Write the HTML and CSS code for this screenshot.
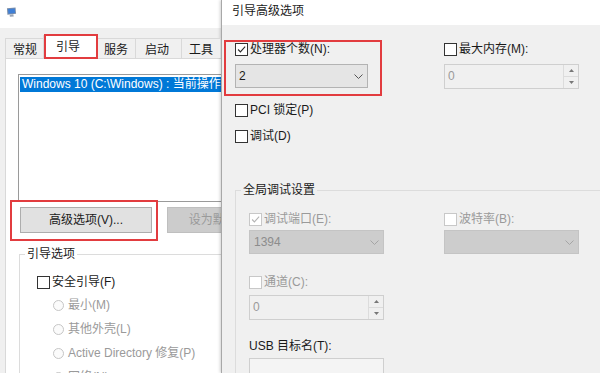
FILE: index.html
```html
<!DOCTYPE html>
<html lang="zh-CN">
<head>
	<meta charset="utf-8">
	<title>引导高级选项</title>
	<link rel="stylesheet" href="styles.css">
</head>
<body>
<div class="screen">
	<div class="dlg main-dlg">
		<div class="titlebar">
			<svg class="app-icon" viewBox="0 0 12 11">
				<path d="M1 1.5 L10.5 0.5 L11 7.5 L1.5 8.5 Z" fill="#7d8fa8"/>
				<path d="M2.2 2.3 L9.6 1.6 L9.9 6.7 L2.6 7.4 Z" fill="#3f7fd6"/>
				<path d="M4 8.5 L8 8.1 L8.5 10.5 L4.2 10.8 Z" fill="#9aa5b5"/>
			</svg>
		</div>
		<div class="main-body">
			<div class="tabs">
				<span class="tab">常规</span>
				<span class="tab on">引导</span>
				<span class="tab">服务</span>
				<span class="tab wide">启动</span>
				<span class="tab">工具</span>
			</div>
			<div class="tab-panel">
				<div class="listbox">
					<div class="list-item sel">Windows 10 (C:\Windows) : 当前操作系统; 默认 OS</div>
				</div>
				<div class="btn-row">
					<button class="btn">高级选项(V)...</button>
					<button class="btn btn-default" disabled>设为默认值(D)</button>
				</div>
				<fieldset class="group boot-opts">
					<legend>引导选项</legend>
					<label class="check"><span class="box"></span>安全引导(F)</label>
					<div class="radios">
						<label class="radio"><span class="dot"></span>最小(M)</label>
						<label class="radio"><span class="dot"></span>其他外壳(L)</label>
						<label class="radio"><span class="dot"></span>Active Directory 修复(P)</label>
						<label class="radio"><span class="dot"></span>网络(N)</label>
					</div>
				</fieldset>
			</div>
		</div>
	</div>

	<div class="dlg adv-dlg">
		<div class="titlebar">引导高级选项</div>
		<div class="adv-body">
			<div class="pair">
				<div class="field">
					<label class="check"><span class="box"><svg viewBox="0 0 13 13"><path d="M2.5 6.5 L5.2 9.3 L10.8 3.2" fill="none" stroke="#2b2b2b" stroke-width="1.3"/></svg></span>处理器个数(N):</label>
					<div class="combo">2<svg class="chev" viewBox="0 0 9 5"><path d="M0.5 0.5 L4.5 4.5 L8.5 0.5" fill="none" stroke="currentColor"/></svg></div>
				</div>
				<div class="field">
					<label class="check"><span class="box"></span>最大内存(M):</label>
					<div class="spin"><span>0</span>
						<span class="spin-btns">
							<i><svg viewBox="0 0 5 3"><path d="M0 3 L2.5 0 L5 3 Z"/></svg></i>
							<i><svg viewBox="0 0 5 3"><path d="M0 0 L2.5 3 L5 0 Z"/></svg></i>
						</span>
					</div>
				</div>
			</div>
			<label class="check pci"><span class="box"></span>PCI 锁定(P)</label>
			<label class="check dbg-check"><span class="box"></span>调试(D)</label>

			<fieldset class="group dbg">
				<legend>全局调试设置</legend>
				<div class="dbg-body">
					<div class="pair">
						<div class="field">
							<label class="check off"><span class="box"><svg viewBox="0 0 13 13"><path d="M2.5 6.5 L5.2 9.3 L10.8 3.2" fill="none" stroke="#b4b4b4" stroke-width="1.3"/></svg></span>调试端口(E):</label>
							<div class="combo off">1394<svg class="chev" viewBox="0 0 9 5"><path d="M0.5 0.5 L4.5 4.5 L8.5 0.5" fill="none" stroke="currentColor"/></svg></div>
						</div>
						<div class="field">
							<label class="check off"><span class="box"></span>波特率(B):</label>
							<div class="combo off"><span></span><svg class="chev" viewBox="0 0 9 5"><path d="M0.5 0.5 L4.5 4.5 L8.5 0.5" fill="none" stroke="currentColor"/></svg></div>
						</div>
					</div>
					<label class="check off chan"><span class="box"></span>通道(C):</label>
					<div class="spin short"><span>0</span>
						<span class="spin-btns">
							<i><svg viewBox="0 0 5 3"><path d="M0 3 L2.5 0 L5 3 Z"/></svg></i>
							<i><svg viewBox="0 0 5 3"><path d="M0 0 L2.5 3 L5 0 Z"/></svg></i>
						</span>
					</div>
					<div class="usb-label">USB 目标名(T):</div>
					<div class="textbox"></div>
				</div>
			</fieldset>
		</div>
	</div>

	<div class="mark mark-tab"></div>
	<div class="mark mark-btn"></div>
	<div class="mark mark-cpu"></div>
</div>
</body>
</html>
```

FILE: styles.css
```css
*{
	margin:0;
	padding:0;
	box-sizing:border-box;
}
body{
	width:600px;
	height:373px;
	overflow:hidden;
	background:#f0f0f0;
	color:#1a1a1a;
	font:12px/16px "Liberation Sans","Noto Sans CJK SC",sans-serif;
}
.screen{
	display:flex;
	height:373px;
	position:relative;
}
.dlg{
	height:373px;
	overflow:hidden;
	background:#f0f0f0;
}
.titlebar{
	background:#fff;
}

/* 系统配置 */
.main-dlg{
	width:221px;
	flex:none;
}
.main-dlg .titlebar{
	height:28px;
	padding:7px 0 0 6px;
}
.app-icon{
	display:block;
	width:11px;
	height:10px;
}
.main-body{
	width:440px;
	padding:7px 0 0 5px;
}
.tabs{
	display:flex;
	align-items:flex-end;
	height:23px;
	position:relative;
	z-index:1;
}
.tab{
	height:20px;
	padding:3px 7px 0;
	border:1px solid #d9d9d9;
	border-bottom:none;
	margin-right:-1px;
	background:#f0f0f0;
}
.tab.wide{
	padding:3px 12px 0 9px;
}
.tab.on{
	height:24px;
	padding:3px 17px 0 12px;
	margin:0 -2px -1px -1px;
	background:#fff;
	position:relative;
}
.tab-panel{
	height:320px;
	background:#fff;
	border:1px solid #d9d9d9;
	padding:15px 0 0 12px;
}
.listbox{
	width:400px;
	height:128px;
	border:1px solid #9a9a9a;
	padding:2px 0 0 1px;
}
.list-item{
	height:15px;
	line-height:15px;
	padding:0 2px;
	white-space:nowrap;
}
.list-item.sel{
	background:#0078d7;
	color:#fff;
}
.btn-row{
	display:flex;
	gap:15px;
	margin:5px 0 0 2px;
}
.btn{
	width:132px;
	height:26px;
	border:1px solid #adadad;
	background:#e1e1e1;
	color:#1a1a1a;
	font:inherit;
}
.btn:disabled{
	background:#cccccc;
	border-color:#bfbfbf;
	color:#9a9a9a;
}
.btn-default{
	width:120px;
}
.group{
	border:1px solid #dcdcdc;
}
.group legend{
	padding:0 2px;
	line-height:16px;
}
.boot-opts{
	width:400px;
	margin:13px 0 0 1px;
	padding:0 0 20px 5px;
}
.check{
	display:flex;
	align-items:center;
	gap:2px;
	height:16px;
	white-space:nowrap;
}
.box{
	width:13px;
	height:13px;
	flex:none;
	border:1px solid #333;
	background:#fff;
}
.box svg{
	display:block;
	width:11px;
	height:11px;
}
.check.off{
	color:#9a9a9a;
}
.check.off .box{
	border-color:#c8c8c8;
}
.boot-opts .check{
	margin:12px 0 0 12px;
}
.radios{
	padding-left:28px;
	margin-top:7px;
}
.radio{
	display:flex;
	align-items:center;
	gap:4px;
	height:16px;
	margin-bottom:8px;
	color:#9a9a9a;
	white-space:nowrap;
}
.dot{
	width:11px;
	height:11px;
	border:1px solid #c6c6c6;
	border-radius:50%;
	background:#fbfbfb;
}

/* 引导高级选项 */
.adv-dlg{
	flex:1;
	border-left:1px solid #a8a8a8;
	box-shadow:-1px 0 3px rgba(0,0,0,.18);
	position:relative;
}
.adv-dlg .titlebar{
	height:25px;
	padding:3px 0 0 10px;
}
.adv-body{
	padding:16px 0 0 13px;
}
.pair{
	display:grid;
	grid-template-columns:133px 135px;
	column-gap:76px;
}
.combo{
	display:flex;
	justify-content:space-between;
	align-items:center;
	height:24px;
	margin-top:7px;
	padding:0 4px 0 3px;
	border:1px solid #b3b3b3;
	background:#e5e5e5;
	color:#1a1a1a;
}
.chev{
	width:9px;
	height:5px;
	color:#555;
}
.combo.off{
	margin-top:3px;
	background:#cdcdcd;
	border-color:#c4c4c4;
	color:#8c8c8c;
	padding-left:4px;
}
.combo.off .chev{
	color:#a5a5a5;
}
.spin{
	display:flex;
	justify-content:space-between;
	height:25px;
	margin-top:7px;
	padding-left:3px;
	border:1px solid #cfcfcf;
	background:#f0f0f0;
	color:#9a9a9a;
	line-height:23px;
}
.spin-btns{
	display:flex;
	flex-direction:column;
	width:15px;
	border-left:1px solid #dcdcdc;
}
.spin-btns i{
	flex:1;
	display:flex;
	align-items:center;
	justify-content:center;
}
.spin-btns i:first-child{
	border-bottom:1px solid #dcdcdc;
}
.spin-btns svg{
	width:5px;
	height:3px;
	fill:#777;
}
.pci{
	margin-top:13px;
}
.dbg-check{
	margin-top:10px;
}
.dbg{
	width:420px;
	margin-top:38px;
	padding:0 0 30px 5px;
}
.dbg-body{
	padding:13px 0 0 8px;
}
.dbg .pair{
	grid-template-columns:135px 135px;
	column-gap:60px;
}
.chan{
	margin-top:20px;
}
.spin.short{
	width:135px;
	margin-top:5px;
}
.usb-label{
	margin-top:18px;
	line-height:16px;
}
.textbox{
	width:135px;
	height:26px;
	margin-top:4px;
	border:1px solid #cfcfcf;
	background:#f4f4f4;
}

/* 标注框 */
.mark{
	position:absolute;
	border:2px solid #e23c3f;
	z-index:5;
}
.mark-tab{
	left:44px;
	top:34px;
	width:54px;
	height:25px;
}
.mark-btn{
	left:10px;
	top:200px;
	width:148px;
	height:41px;
}
.mark-cpu{
	left:224px;
	top:40px;
	width:158px;
	height:56px;
}
```
